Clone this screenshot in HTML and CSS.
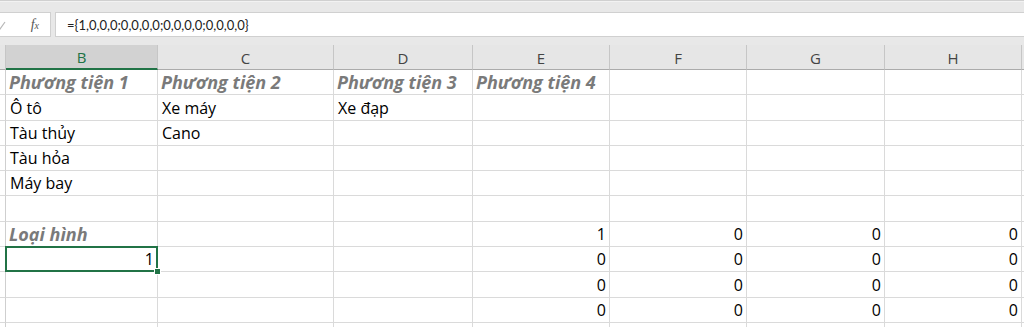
FILE: index.html
```html
<!DOCTYPE html>
<html lang="vi">
<head>
<meta charset="utf-8">
<title>Sheet</title>
<link rel="stylesheet" href="styles.css">
</head>
<body>
<div class="app">
  <div class="topband"></div>
  <div class="formula-row">
    <div class="fx-box">
      <svg class="check" width="6" height="10" viewBox="0 0 6 10"><path d="M-3 6 L0 9 L5 2" fill="none" stroke="#b8b8b8" stroke-width="1.2"/></svg>
      <span class="fx">f<span class="fx-x">x</span></span>
    </div>
    <div class="formula-input">={1,0,0,0;0,0,0,0;0,0,0,0;0,0,0,0}</div>
  </div>
  <div class="gap"></div>
  <div class="sheet">
    <div class="hd rh"></div>
    <div class="hd sel">B</div>
    <div class="hd">C</div>
    <div class="hd">D</div>
    <div class="hd">E</div>
    <div class="hd">F</div>
    <div class="hd">G</div>
    <div class="hd">H</div>
    <div class="hd end"></div>

    <div class="c rh"></div><div class="c t lbl">Phương tiện 1</div><div class="c t lbl">Phương tiện 2</div><div class="c t lbl">Phương tiện 3</div><div class="c t lbl">Phương tiện 4</div><div class="c"></div><div class="c"></div><div class="c"></div><div class="c end"></div>

    <div class="c rh"></div><div class="c t">Ô tô</div><div class="c t">Xe máy</div><div class="c t">Xe đạp</div><div class="c"></div><div class="c"></div><div class="c"></div><div class="c"></div><div class="c end"></div>

    <div class="c rh"></div><div class="c t">Tàu thủy</div><div class="c t">Cano</div><div class="c"></div><div class="c"></div><div class="c"></div><div class="c"></div><div class="c"></div><div class="c end"></div>

    <div class="c rh"></div><div class="c t">Tàu hỏa</div><div class="c"></div><div class="c"></div><div class="c"></div><div class="c"></div><div class="c"></div><div class="c"></div><div class="c end"></div>

    <div class="c rh"></div><div class="c t">Máy bay</div><div class="c"></div><div class="c"></div><div class="c"></div><div class="c"></div><div class="c"></div><div class="c"></div><div class="c end"></div>

    <div class="c rh"></div><div class="c"></div><div class="c"></div><div class="c"></div><div class="c"></div><div class="c"></div><div class="c"></div><div class="c"></div><div class="c end"></div>

    <div class="c rh"></div><div class="c t lbl">Loại hình</div><div class="c"></div><div class="c"></div><div class="c n">1</div><div class="c n">0</div><div class="c n">0</div><div class="c n">0</div><div class="c end"></div>

    <div class="c rh"></div><div class="c n active">1<span class="handle"></span></div><div class="c"></div><div class="c"></div><div class="c n">0</div><div class="c n">0</div><div class="c n">0</div><div class="c n">0</div><div class="c end"></div>

    <div class="c rh"></div><div class="c"></div><div class="c"></div><div class="c"></div><div class="c n">0</div><div class="c n">0</div><div class="c n">0</div><div class="c n">0</div><div class="c end"></div>

    <div class="c rh"></div><div class="c"></div><div class="c"></div><div class="c"></div><div class="c n">0</div><div class="c n">0</div><div class="c n">0</div><div class="c n">0</div><div class="c end"></div>

    <div class="c rh"></div><div class="c"></div><div class="c"></div><div class="c"></div><div class="c"></div><div class="c"></div><div class="c"></div><div class="c"></div><div class="c end"></div>
  </div>
</div>
</body>
</html>
```

FILE: styles.css
```css
* { box-sizing: border-box; }
html, body {
  margin: 0;
  padding: 0;
  width: 1024px;
  height: 327px;
  overflow: hidden;
  background: #ffffff;
}
.app {
  font-family: "Open Sans", Lato, sans-serif;
  color: #000;
  height: 327px;
  overflow: hidden;
}
.topband {
  height: 12px;
  background: #e8e8e8;
  border-top: 1px solid #d0d0d0;
  box-shadow: inset 0 1px 0 #f2f2f2;
}
.formula-row {
  display: flex;
  gap: 4px;
  height: 25px;
  background: #e8e8e8;
}
.fx-box {
  width: 51px;
  background: #ffffff;
  border: 1px solid #d0d0d0;
  border-left: none;
  display: flex;
  align-items: center;
  justify-content: space-between;
  padding-right: 11px;
}
.check { display: block; }
.fx {
  font-family: "Liberation Serif", serif;
  font-style: italic;
  font-size: 14px;
  color: #555;
  line-height: 1;
}
.fx-x { font-size: 10px; }
.formula-input {
  flex: 1;
  background: #ffffff;
  border: 1px solid #d0d0d0;
  border-right: none;
  display: flex;
  align-items: center;
  padding-left: 11px;
  font-family: Lato, sans-serif;
  font-size: 13px;
  color: #222;
}
.gap {
  height: 8px;
  background: #e8e8e8;
}
.sheet {
  display: grid;
  grid-template-columns: 6px 152px 176px 139px 137px 137px 138px 137px 2px;
  grid-template-rows: 25px repeat(11, 25.3px);
}
.hd {
  background: #e6e6e6;
  border-right: 1px solid #c6c6c6;
  border-bottom: 1px solid #ababab;
  display: flex;
  align-items: center;
  justify-content: center;
  font-size: 15px;
  color: #444;
  padding-top: 1px;
}
.hd.sel {
  background: #d2d2d2;
  color: #217346;
  border-bottom: 2px solid #217346;
}
.hd.end { border-right: none; }
.c {
  border-right: 1px solid #dadada;
  border-bottom: 1px solid #dadada;
  display: flex;
  align-items: flex-end;
  padding: 0 3px 1px 4px;
  font-size: 16px;
  line-height: 21px;
  white-space: nowrap;
  position: relative;
}
.c.rh { padding: 0; border-right-color: #cfcfcf; }
.c.end { border-right: none; padding: 0; }
.c.t { justify-content: flex-start; }
.c.n { justify-content: flex-end; }
.lbl {
  font-weight: bold;
  font-style: italic;
  font-size: 18px;
  line-height: 22px;
  color: #7a7a7a;
  padding-left: 3px;
}
.active::after {
  content: "";
  position: absolute;
  left: -1px;
  top: -1px;
  right: -1px;
  bottom: -1px;
  border: 2px solid #217346;
  pointer-events: none;
}
.handle {
  position: absolute;
  right: -4px;
  bottom: -4px;
  width: 5px;
  height: 5px;
  background: #217346;
  border: 1px solid #ffffff;
  z-index: 2;
  box-sizing: content-box;
}
```
